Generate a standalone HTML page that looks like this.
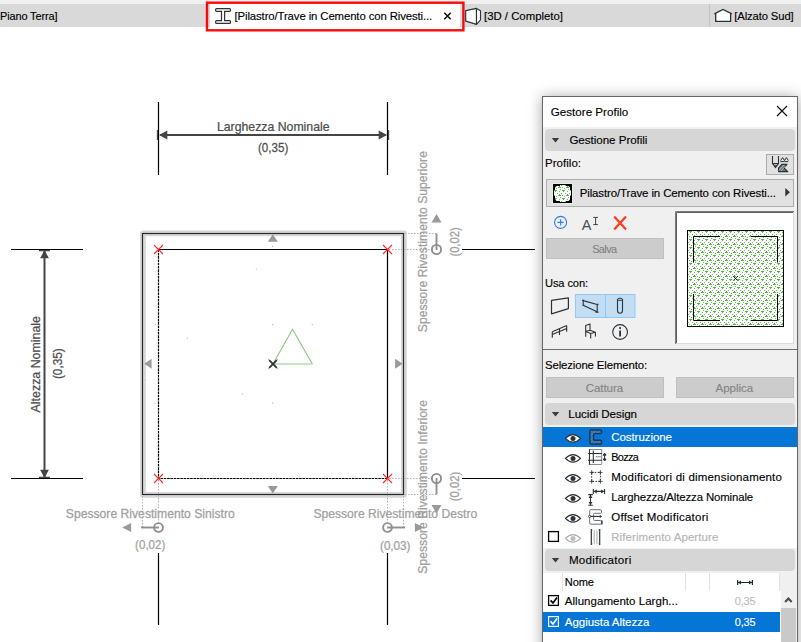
<!DOCTYPE html>
<html lang="it"><head><meta charset="utf-8"><title>Gestore Profilo</title>
<style>
html,body{margin:0;padding:0;background:#fff;}
body{width:801px;height:642px;overflow:hidden;position:relative;font-family:"Liberation Sans", sans-serif;font-size:11.5px;}
.abs,.t{position:absolute;}
.t{white-space:nowrap;line-height:16px;-webkit-text-stroke:0.14px currentColor;}
svg{position:absolute;left:0;top:0;overflow:visible;}
svg text{font-family:"Liberation Sans", sans-serif;}
.hdr{position:absolute;left:545px;width:250px;height:22px;background:#d6d6d6;border-radius:4px;}
.btn{position:absolute;background:#cccccc;border:1px solid #bfbfbf;box-sizing:border-box;}
.ns{-webkit-text-stroke:0 !important;}
.row{position:absolute;left:543px;width:254px;height:20px;}
</style></head><body>

<div class="abs" style="left:0;top:0;width:801px;height:4px;background:#f0f0f0"></div>
<div class="abs" style="left:0;top:4px;width:801px;height:23px;background:#d9d9d9"></div>
<div class="abs" style="left:210px;top:3px;width:250px;height:27px;background:#fff;"></div>
<div class="abs" style="left:208px;top:3px;width:2px;height:1px;background:#f0f0f0;"></div>
<div class="abs" style="left:460px;top:3px;width:3px;height:24px;background:#dde1e4;"></div>
<div class="abs" style="left:208px;top:27px;width:256px;height:3px;background:#fff;"></div>
<svg width="801" height="642"><rect x="207" y="2.7" width="256.4" height="27.6" fill="none" stroke="#fa0a0a" stroke-width="2.4"/></svg>
<div class="abs" style="left:709px;top:4px;width:1px;height:23px;background:#c2c2c2"></div>
<span class="t " style="left:0.00px;top:8.11px;font-size:10.95px;letter-spacing:-0.120px;color:#000">Piano Terra]</span>
<span class="t " style="left:234.50px;top:7.95px;font-size:11.39px;letter-spacing:-0.120px;color:#000">[Pilastro/Trave in Cemento con Rivesti...</span>
<span class="t " style="left:484.00px;top:7.95px;font-size:11.40px;letter-spacing:-0.014px;color:#000">[3D / Completo]</span>
<span class="t " style="left:734.30px;top:8.00px;font-size:11.26px;letter-spacing:-0.120px;color:#000">[Alzato Sud]</span>
<svg width="801" height="642" viewBox="0 0 801 642">
<rect x="142.9" y="233.4" width="261" height="261.4" fill="none" stroke="#d6d6d6" stroke-width="5.8" stroke-linejoin="round"/>
<rect x="142.5" y="233.5" width="261" height="261" fill="none" stroke="#262626" stroke-width="1.15"/>
<path d="M158.5 249.5H387.5V478.5" fill="none" stroke="#000" stroke-width="1.2"/><path d="M158.5 249.5V478.5H387.5" fill="none" stroke="#000" stroke-width="1.2" stroke-dasharray="2.6 0.7"/>
<path d="M405 233.5H436 M389 249.5H431 M389 478.5H431 M405 494.5H436 M142.5 496V527 M158.5 480V522 M387.5 480V522 M403.5 496V527" stroke="#b0b0b0" stroke-width="1" stroke-dasharray="1.5 1.5" fill="none"/>
<path d="M158.5 102V175 M387.5 102V175" stroke="#000" stroke-width="1.2"/>
<path d="M160 135H386" stroke="#444" stroke-width="2"/>
<path d="M159 135l8.3 -4.4v8.8z M387 135l-8.3 -4.4v8.8z" fill="#444"/>
<path d="M157.4 130v10 M388.6 130v10" stroke="#444" stroke-width="1.1"/>
<text transform="translate(216.90 130.60) scale(0.9460 1)" font-size="13.00" fill="#4d4d4d" stroke="#4d4d4d" stroke-width="0.25">Larghezza Nominale</text>
<text transform="translate(258.00 152.00) scale(0.8922 1)" font-size="13.00" fill="#4d4d4d" stroke="#4d4d4d" stroke-width="0.25">(0,35)</text>
<path d="M11 249.5H83 M11 478.5H83" stroke="#000" stroke-width="1.2"/>
<path d="M44.5 251V477" stroke="#444" stroke-width="2"/>
<path d="M44.5 250l-4.4 8.3h8.8z M44.5 478l-4.4 -8.3h8.8z" fill="#444"/>
<path d="M39 250.7h11 M39 477.3h11" stroke="#444" stroke-width="1.2"/>
<text transform="translate(39.90 412.40) rotate(-90) scale(0.9540 1)" font-size="13.00" fill="#4d4d4d" stroke="#4d4d4d" stroke-width="0.25">Altezza Nominale</text>
<text transform="translate(61.60 379.10) rotate(-90) scale(0.9099 1)" font-size="13.00" fill="#4d4d4d" stroke="#4d4d4d" stroke-width="0.25">(0,35)</text>
<text transform="translate(427.20 332.20) rotate(-90) scale(0.9362 1)" font-size="13.00" fill="#a0a0a0" stroke="#a0a0a0" stroke-width="0.25">Spessore Rivestimento Superiore</text>
<text transform="translate(459.00 256.50) rotate(-90) scale(0.8628 1)" font-size="13.00" fill="#a0a0a0" stroke="#a0a0a0" stroke-width="0.25">(0,02)</text>
<text transform="translate(427.20 573.80) rotate(-90) scale(0.9396 1)" font-size="13.00" fill="#a0a0a0" stroke="#a0a0a0" stroke-width="0.25">Spessore Rivestimento Inferiore</text>
<text transform="translate(459.00 501.20) rotate(-90) scale(0.8716 1)" font-size="13.00" fill="#a0a0a0" stroke="#a0a0a0" stroke-width="0.25">(0,02)</text>
<path d="M462 249.5H535 M462 478.5H535 M158.5 553V625 M387.5 553V625" stroke="#000" stroke-width="1.2"/>
<circle cx="436.5" cy="249.5" r="4.6" stroke="#8f8f8f" stroke-width="1.9" fill="none"/><path d="M436.5 233.5V250" stroke="#8f8f8f" stroke-width="1.9" fill="none"/><path d="M436.5 214l5 8.5h-10z" fill="#9a9a9a"/>
<circle cx="436.5" cy="478.5" r="4.6" stroke="#8f8f8f" stroke-width="1.9" fill="none"/><path d="M436.5 478V494.5" stroke="#8f8f8f" stroke-width="1.9" fill="none"/><path d="M436.5 513.5l5 -8.5h-10z" fill="#9a9a9a"/>
<circle cx="158.5" cy="527.5" r="4.4" stroke="#8f8f8f" stroke-width="1.9" fill="none"/><path d="M141 527.5H159" stroke="#8f8f8f" stroke-width="1.9" fill="none"/><path d="M122.3 527.5l8.8 -4.4v8.8z" fill="#9a9a9a"/>
<circle cx="387.5" cy="527.5" r="4.4" stroke="#8f8f8f" stroke-width="1.9" fill="none"/><path d="M387 527.5H405" stroke="#8f8f8f" stroke-width="1.9" fill="none"/><path d="M423.7 527.5l-8.8 -4.4v8.8z" fill="#9a9a9a"/>
<text transform="translate(65.80 518.00) scale(0.9367 1)" font-size="13.00" fill="#a0a0a0" stroke="#a0a0a0" stroke-width="0.25">Spessore Rivestimento Sinistro</text>
<text transform="translate(135.10 549.30) scale(0.8893 1)" font-size="13.00" fill="#a0a0a0" stroke="#a0a0a0" stroke-width="0.25">(0,02)</text>
<text transform="translate(313.40 517.80) scale(0.9341 1)" font-size="13.00" fill="#a0a0a0" stroke="#a0a0a0" stroke-width="0.25">Spessore Rivestimento Destro</text>
<text transform="translate(380.00 549.60) scale(0.8981 1)" font-size="13.00" fill="#a0a0a0" stroke="#a0a0a0" stroke-width="0.25">(0,03)</text>
<path d="M154.0 245.0l9 9m0 -9l-9 9" stroke="#ff2a2a" stroke-width="1.1" fill="none"/>
<path d="M383.0 245.0l9 9m0 -9l-9 9" stroke="#ff2a2a" stroke-width="1.1" fill="none"/>
<path d="M154.0 474.0l9 9m0 -9l-9 9" stroke="#ff2a2a" stroke-width="1.1" fill="none"/>
<path d="M383.0 474.0l9 9m0 -9l-9 9" stroke="#ff2a2a" stroke-width="1.1" fill="none"/>
<path d="M272.8 234.3l5 7.5h-10z M272.8 493.5l5 -7.5h-10z M144.3 363.7l7.3 -5v10z M402.7 363.7l-7.6 -5v10z" fill="#9a9a9a"/>
<path d="M273 364L292.5 329.3L312.4 364" fill="none" stroke="#86c478" stroke-width="1.1"/><path d="M273 364H312.4" stroke="#b5dcab" stroke-width="1.6"/>
<path d="M268.3 359.3l9.4 9.4m0 -9.4l-9.4 9.4" stroke="#ff5a5a" stroke-width="1"/><path d="M269.2 360.2l7.6 7.6m0 -7.6l-7.6 7.6" stroke="#333" stroke-width="1.8"/>
<g fill="#a5d69a"><rect x="255.8" y="268.6" width="1.2" height="1.2"/><rect x="272.0" y="245.8" width="1.2" height="1.2"/><rect x="154.6" y="324.0" width="1.2" height="1.2"/><rect x="272.0" y="324.0" width="1.2" height="1.2"/><rect x="311.6" y="324.0" width="1.2" height="1.2"/><rect x="186.7" y="337.7" width="1.2" height="1.2"/><rect x="144.9" y="379.8" width="1.2" height="1.2"/><rect x="241.8" y="393.4" width="1.2" height="1.2"/><rect x="154.6" y="402.4" width="1.2" height="1.2"/><rect x="272.0" y="402.4" width="1.2" height="1.2"/></g>
</svg>
<div class="abs" style="left:542px;top:96px;width:254px;height:560px;background:#f0f0f0;border:1px solid #666;box-shadow:0 1px 13px rgba(0,0,0,0.36);"></div>
<div class="abs" style="left:543px;top:97px;width:254px;height:30px;background:#fff"></div>
<span class="t " style="left:550.80px;top:104.38px;font-size:11.60px;letter-spacing:0.010px;color:#000">Gestore Profilo</span>
<svg width="801" height="642"><path d="M777 106l10 10m0 -10l-10 10" stroke="#111" stroke-width="1.2" fill="none"/></svg>
<div class="hdr" style="top:129px"></div>
<svg width="801" height="642"><path d="M551.8 138.0h7.4l-3.7 4.6z" fill="#3c3c3c"/></svg>
<span class="t " style="left:569.40px;top:131.98px;font-size:11.60px;letter-spacing:-0.037px;color:#000">Gestione Profili</span>
<span class="t " style="left:545.10px;top:154.82px;font-size:11.50px;letter-spacing:0.015px;color:#000">Profilo:</span>
<div class="abs" style="left:766px;top:154px;width:28px;height:21px;background:#e1e1e1;border:1px solid #adadad;box-sizing:border-box"></div>
<div class="abs" style="left:546px;top:179px;width:248px;height:28px;background:#e1e1e1;border:1px solid #adadad;box-sizing:border-box"></div>
<span class="t " style="left:579.70px;top:185.13px;font-size:11.47px;letter-spacing:-0.120px;color:#000">Pilastro/Trave in Cemento con Rivesti...</span>
<svg width="801" height="642"><path d="M785.3 188l4.6 4.3l-4.6 4.3z" fill="#333"/></svg>
<div class="btn" style="left:546px;top:238px;width:118px;height:21px"></div>
<span class="t " style="left:592.20px;top:241.42px;font-size:10.90px;letter-spacing:-0.592px;color:#838383">Salva</span>
<span class="t " style="left:545.00px;top:274.84px;font-size:11.13px;letter-spacing:-0.120px;color:#000">Usa con:</span>
<span class="t ns" style="left:581.70px;top:217.31px;font-size:14.40px;letter-spacing:0.195px;color:#454d53">A</span>
<div class="abs" style="left:543px;top:349px;width:254px;height:1px;background:#6e6e6e"></div>
<span class="t " style="left:545.00px;top:357.07px;font-size:11.36px;letter-spacing:-0.120px;color:#000">Selezione Elemento:</span>
<div class="btn" style="left:546px;top:377px;width:118px;height:21px"></div>
<div class="btn" style="left:676px;top:377px;width:118px;height:21px"></div>
<span class="t " style="left:585.80px;top:380.22px;font-size:11.50px;letter-spacing:-0.069px;color:#838383">Cattura</span>
<span class="t " style="left:715.50px;top:380.22px;font-size:11.50px;letter-spacing:-0.003px;color:#838383">Applica</span>
<div class="hdr" style="top:403px"></div>
<svg width="801" height="642"><path d="M551.8 412.0h7.4l-3.7 4.6z" fill="#3c3c3c"/></svg>
<span class="t " style="left:568.30px;top:405.88px;font-size:11.60px;letter-spacing:-0.070px;color:#000">Lucidi Design</span>
<div class="abs" style="left:543px;top:427px;width:254px;height:121px;background:#fff"></div>
<div class="row" style="top:427px;background:#0676d6"></div>
<span class="t " style="left:611.20px;top:429.02px;font-size:11.50px;letter-spacing:-0.056px;color:#fff">Costruzione</span>
<span class="t " style="left:611.20px;top:449.22px;font-size:10.90px;letter-spacing:-0.674px;color:#000">Bozza</span>
<span class="t " style="left:611.20px;top:469.02px;font-size:11.50px;letter-spacing:0.193px;color:#000">Modificatori di dimensionamento</span>
<span class="t " style="left:611.20px;top:489.05px;font-size:11.40px;letter-spacing:-0.120px;color:#000">Larghezza/Altezza Nominale</span>
<span class="t " style="left:611.20px;top:509.02px;font-size:11.50px;letter-spacing:0.263px;color:#000">Offset Modificatori</span>
<span class="t " style="left:611.20px;top:529.02px;font-size:11.50px;letter-spacing:0.091px;color:#b4b4b4">Riferimento Aperture</span>
<div class="hdr" style="top:549px"></div>
<svg width="801" height="642"><path d="M551.8 558.0h7.4l-3.7 4.6z" fill="#3c3c3c"/></svg>
<span class="t " style="left:568.90px;top:552.08px;font-size:11.60px;letter-spacing:0.281px;color:#000">Modificatori</span>
<div class="abs" style="left:543px;top:573px;width:254px;height:80px;background:#fff"></div>
<div class="abs" style="left:780px;top:573px;width:17px;height:18px;background:#f0f0f0"></div>
<div class="abs" style="left:562px;top:573px;width:1px;height:18px;background:#e2e2e2"></div>
<div class="abs" style="left:685px;top:573px;width:1px;height:18px;background:#e2e2e2"></div>
<div class="abs" style="left:709px;top:573px;width:1px;height:18px;background:#e2e2e2"></div>
<div class="abs" style="left:779px;top:573px;width:1px;height:18px;background:#e2e2e2"></div>
<div class="abs" style="left:543px;top:612px;width:237px;height:19.6px;background:#0676d6"></div>
<div class="abs" style="left:781px;top:591px;width:16px;height:17px;background:#f0f0f0"></div>
<div class="abs" style="left:781px;top:608px;width:15px;height:40px;background:#c9c9c9"></div>
<div class="abs" style="left:796px;top:591px;width:1px;height:60px;background:#efefef"></div>
<span class="t " style="left:564.80px;top:574.16px;font-size:11.08px;letter-spacing:-0.120px;color:#000">Nome</span>
<span class="t " style="left:564.80px;top:592.82px;font-size:11.50px;letter-spacing:0.034px;color:#000">Allungamento Largh...</span>
<span class="t " style="left:564.80px;top:613.82px;font-size:11.50px;letter-spacing:-0.035px;color:#fff">Aggiusta Altezza</span>
<span class="t " style="left:734.80px;top:593.02px;font-size:10.90px;letter-spacing:-0.172px;color:#bdbdbd">0,35</span>
<span class="t " style="left:734.80px;top:614.02px;font-size:10.90px;letter-spacing:-0.172px;color:#fff">0,35</span>
<svg width="801" height="642" viewBox="0 0 801 642" fill="none">
<path d="M216.6 8.6H229.5Q230.5 8.6 230.5 9.6V10.3Q230.5 11.3 229.5 11.3H224.6V20.7H229.5Q230.5 20.7 230.5 21.7V22.4Q230.5 23.4 229.5 23.4H216.6Q215.6 23.4 215.6 22.4V21.7Q215.6 20.7 216.6 20.7H221.5V11.3H216.6Q215.6 11.3 215.6 10.3V9.6Q215.6 8.6 216.6 8.6Z" fill="#fff" stroke="#2b3338" stroke-width="1.2"/>
<path d="M465.7 10.6L476.5 8.4V24.3L465.7 21.2Z" fill="#fff" stroke="#2b3338" stroke-width="1.2" stroke-linejoin="round"/><path d="M476.5 8.4L480.5 10.7V19.8L476.5 24.3Z" fill="#fff" stroke="#2b3338" stroke-width="1.1" stroke-linejoin="round"/>
<path d="M715.7 13.3L723 9.6L730.6 13.3V21.4H715.7Z" fill="#fff"/><path d="M714.3 13.9L723 9.4L731.9 13.9M715.7 13.4V21.4H730.6V13.4" stroke="#2b3338" stroke-width="1.3" stroke-linejoin="miter"/>
<path d="M444.3 12.8l6.4 6.4m0 -6.4l-6.4 6.4" stroke="#111" stroke-width="1.6"/>
<defs><pattern id="pz" x="689" y="231" width="8" height="8" patternUnits="userSpaceOnUse"><g fill="#55b444" shape-rendering="crispEdges"><rect x="0" y="0" width="3" height="1"/><rect x="1" y="1" width="1" height="1"/><rect x="5" y="4" width="1" height="1"/><rect x="4" y="5" width="3" height="1"/><g fill="#68bf58"><rect x="5" y="1" width="1" height="1"/><rect x="3" y="3" width="1" height="1"/><rect x="7" y="3" width="1" height="1"/><rect x="0" y="5" width="1" height="1"/><rect x="2" y="6" width="1" height="1"/><rect x="6" y="7" width="1" height="1"/></g></g></pattern><pattern id="pt" x="554" y="182" width="8" height="8" patternUnits="userSpaceOnUse"><g fill="#55b444" shape-rendering="crispEdges"><rect x="0" y="0" width="3" height="1"/><rect x="1" y="1" width="1" height="1"/><rect x="5" y="4" width="1" height="1"/><rect x="4" y="5" width="3" height="1"/><g fill="#68bf58"><rect x="5" y="1" width="1" height="1"/><rect x="3" y="3" width="1" height="1"/><rect x="7" y="3" width="1" height="1"/><rect x="0" y="5" width="1" height="1"/><rect x="2" y="6" width="1" height="1"/><rect x="6" y="7" width="1" height="1"/></g></g></pattern></defs>
<rect x="675" y="211" width="119" height="133" fill="#fff"/>
<path d="M675.5 344V211.5H794" stroke="#7a7a7a" stroke-width="1"/><path d="M676.5 343V212.5H793" stroke="#5f5f5f" stroke-width="1"/><path d="M676 343.5H793.5V212" stroke="#dcdcdc" stroke-width="1"/>
<rect x="687.5" y="230.5" width="96" height="96" fill="#fff"/><rect x="687.5" y="230.5" width="96" height="96" fill="url(#pz)" stroke="#000" stroke-width="1"/>
<path d="M693.5 262.6V236.5H720M751 236.5H777.5V262.6M693.5 294V320.5H720M751 320.5H777.5V294" stroke="#000" stroke-width="1"/>
<path d="M733.3 276.2l4.4 4.4m0 -4.4l-4.4 4.4" stroke="#000" stroke-width="0.9"/>
<rect x="552.5" y="183.5" width="20" height="20" fill="#f4f4f4"/><rect x="553" y="184" width="19" height="19" fill="#000"/><path d="M556.5 186H560V185H566V186H568.5L570 187.5V190H571V196H570V199.5L568.5 201H566V202H560V201H556.5L555 199.5V196H554V190H555V187.5Z" fill="#fff"/><path d="M556.5 186H560V185H566V186H568.5L570 187.5V190H571V196H570V199.5L568.5 201H566V202H560V201H556.5L555 199.5V196H554V190H555V187.5Z" fill="url(#pt)"/>
<path d="M772.5 156V163.6L775.5 167.6L778.5 163.6V156M772.5 163.6H778.5" stroke="#2b3338" stroke-width="1.1"/>
<path d="M774.3 165.2h2.4l-1.2 2.2z" fill="#2b3338"/>
<path d="M780.6 160.6l2 -3l2 3m-0.2 0l2 -3l2 3M780.4 161.6h4M784.6 161.6h3.6" stroke="#2b3338" stroke-width="1"/>
<path d="M778.5 171.6V168L781.8 164.4H787L784 168L787.8 171.6Z" fill="#6b7377" stroke="#2b3338" stroke-width="1.1" stroke-linejoin="round"/>
<path d="M779 170.5l5 -5.6M781 171l4.5 -5" stroke="#d8d8d8" stroke-width="0.7"/>
<circle cx="560.6" cy="222.4" r="6" stroke="#2f7df6" stroke-width="1.1"/><path d="M557.5 222.4h6.2M560.6 219.3v6.2" stroke="#2f7df6" stroke-width="1.1"/>
<path d="M593.3 217.4h4.6M593.3 224.6h4.6M595.6 217.4v7.2" stroke="#3a4248" stroke-width="1"/>
<path d="M614.2 216.4l11.8 13.2m0 -13.2l-11.8 13.2" stroke="#ff3b1c" stroke-width="2.2"/>
<rect x="575.5" y="294.5" width="30" height="23" fill="#c3ddf3" stroke="#92c8f5"/><rect x="605.5" y="294.5" width="29.5" height="23" fill="#c3ddf3" stroke="#92c8f5"/>
<path d="M551.5 300.3L568.4 297.9V308.6L551.5 313.9Z" stroke="#2b3338" stroke-width="1.2" stroke-linejoin="round"/>
<path d="M582.3 300.4L598 304.7M583.2 305.2L597 311.8M583.2 300.4V305.4M597.2 304.4V312.4M595.6 304.2H598.6M595.4 312.2H598.6M582 300.3h2.2M582.4 305.3h2" stroke="#2b3338" stroke-width="1.1"/>
<path d="M617.5 299.3V310.5Q617.6 313.2 620 313.3Q622.4 313.2 622.5 310.5V299.3" stroke="#2b3338" stroke-width="1.1"/><ellipse cx="620" cy="299.3" rx="2.5" ry="1.1" stroke="#2b3338" stroke-width="1"/>
<path d="M552.3 331.8V337.8M559.5 328.8V335M566.7 325.4V331.8M552.3 331.8L566.7 325.6M552.3 334.6L566.7 328.4" stroke="#2b3338" stroke-width="1.1"/>
<path d="M585.7 336.8V325.4L590 323.9V330.6M585.7 331.6L590 330.2L595.4 332.2L590.7 333.5ZM590.7 333.5V338.6M595.4 332.2V336.6" stroke="#2b3338" stroke-width="1.1" stroke-linejoin="round"/>
<circle cx="620.1" cy="332" r="7.4" stroke="#2b3338" stroke-width="1.1"/><path d="M620.1 330.6V336.6" stroke="#2b3338" stroke-width="1.8"/><circle cx="620.1" cy="328.1" r="1.05" fill="#2b3338"/>
<path d="M565.4 438.4q7.6 -7.6 15.2 0q-7.6 7.6 -15.2 0z" fill="#fff" stroke="#2b3338" stroke-width="1.15" stroke-linejoin="round"/><circle cx="573.0" cy="438.4" r="2.5" fill="#2b3338"/>
<path d="M565.4 458.4q7.6 -7.6 15.2 0q-7.6 7.6 -15.2 0z" fill="#fff" stroke="#2b3338" stroke-width="1.15" stroke-linejoin="round"/><circle cx="573.0" cy="458.4" r="2.5" fill="#2b3338"/>
<path d="M565.4 478.4q7.6 -7.6 15.2 0q-7.6 7.6 -15.2 0z" fill="#fff" stroke="#2b3338" stroke-width="1.15" stroke-linejoin="round"/><circle cx="573.0" cy="478.4" r="2.5" fill="#2b3338"/>
<path d="M565.4 498.4q7.6 -7.6 15.2 0q-7.6 7.6 -15.2 0z" fill="#fff" stroke="#2b3338" stroke-width="1.15" stroke-linejoin="round"/><circle cx="573.0" cy="498.4" r="2.5" fill="#2b3338"/>
<path d="M565.4 518.4q7.6 -7.6 15.2 0q-7.6 7.6 -15.2 0z" fill="#fff" stroke="#2b3338" stroke-width="1.15" stroke-linejoin="round"/><circle cx="573.0" cy="518.4" r="2.5" fill="#2b3338"/>
<path d="M565.4 538.4q7.6 -7.6 15.2 0q-7.6 7.6 -15.2 0z" fill="#fff" stroke="#b0b0b0" stroke-width="1.15" stroke-linejoin="round"/><circle cx="573.0" cy="538.4" r="2.5" fill="#bdbdbd"/>
<path d="M591.3 430H600.5Q601.5 430 601.5 431V432.6Q601.5 433.6 600.5 433.6H594.6Q593.6 433.6 593.6 434.6V439.3Q593.6 440.3 594.6 440.3H600.5Q601.5 440.3 601.5 441.3V443Q601.5 444 600.5 444H591.3Q589.9 444 589.9 442.6V431.4Q589.9 430 591.3 430Z" fill="#2b86e0" stroke="#2b3338" stroke-width="1.4"/>
<path d="M590.5 434l3.5 -3.6M590.5 438l3 -3M590.5 442l3 -3M595 433.3l3 -3M598.5 433.3l2.6 -2.6M592 443.6l3 -3M595.5 443.6l3 -3M599 443.6l2.2 -2.2" stroke="#2b3338" stroke-width="0.55" stroke-opacity="0.75"/>
<path d="M589.5 449.5H601.7V464.5H589.5" stroke="#8a8f92" stroke-width="1"/>
<path d="M589.5 449.3V464.7M593.3 450.5V463M588 453.5H602M588 460.3H602" stroke="#2b3338" stroke-width="1.1"/>
<path d="M595.5 457.3l0.9 -1l0.9 1l0.9 -1l0.9 1l0.9 -1l0.9 1" stroke="#2b3338" stroke-width="0.6"/>
<path d="M604.6 454.2V460M604.6 453.2l1.5 2h-3zM604.6 461l1.5 -2h-3z" stroke="#2b3338" stroke-width="1" fill="#2b3338"/>
<path d="M591.7 472.4H600.4V481.4H591.7Z" stroke="#2b3338" stroke-width="1" stroke-dasharray="1.6 1.4"/>
<path d="M589.5 472.4h4.4M591.7 470.2v4.4" stroke="#2b3338" stroke-width="0.8"/>
<path d="M598.2 472.4h4.4M600.4 470.2v4.4" stroke="#2b3338" stroke-width="0.8"/>
<path d="M589.5 481.4h4.4M591.7 479.2v4.4" stroke="#2b3338" stroke-width="0.8"/>
<path d="M598.2 481.4h4.4M600.4 479.2v4.4" stroke="#2b3338" stroke-width="0.8"/>
<path d="M593.3 489V494M604.6 489V494M593.3 491.4H604.6M588.3 494.6H592.8M588.3 505.3H592.8M590.5 494.6V505.3" stroke="#2b3338" stroke-width="1.1"/>
<path d="M593.6 491.4l3.2 -2v4zM604.3 491.4l-3.2 -2v4zM590.5 494.8l-2 3.2h4zM590.5 505.1l-2 -3.2h4z" fill="#2b3338"/>
<path d="M590.8 509.7H600.5Q601.5 509.7 601.5 510.7V512.3Q601.5 513.3 600.5 513.3H594.6Q593.6 513.3 593.6 514.3V519.5Q593.6 520.5 594.6 520.5H600.8Q601.8 520.5 601.8 521.5V523.2Q601.8 524.2 600.8 524.2H590.8Q589.7 524.2 589.7 523.2V510.7Q589.7 509.7 590.8 509.7Z" stroke="#6e7579" stroke-width="1"/>
<path d="M590.5 516.4H601" stroke="#2b3338" stroke-width="1.1"/><circle cx="589.6" cy="516.4" r="1.1" fill="#fff" stroke="#2b3338" stroke-width="0.9"/><path d="M602.2 516.4l-2.4 -1.5v3z" fill="#2b3338"/><path d="M601.9 520.5V524.5" stroke="#2b3338" stroke-width="1.3"/>
<path d="M591.3 529V545M599.7 529V545" stroke="#2b3338" stroke-width="1.2"/><path d="M594.2 531V543.5M597 531V543.5" stroke="#9aa0a3" stroke-width="0.9"/><path d="M592 530.2h7M592 543.8h7" stroke="#b5b9bb" stroke-width="0.8" stroke-dasharray="1 1"/>
<rect x="548.6" y="531.6" width="9.8" height="9.8" fill="#fff" stroke="#000" stroke-width="1.3"/>
<path d="M737.6 580V585M752.4 580V585M738 582.5H752" stroke="#1d2a30" stroke-width="1.2"/><path d="M738 582.5l3 -2v4zM752 582.5l-3 -2v4z" fill="#1d2a30"/>
<rect x="548.6" y="595.6" width="9.8" height="9.8" fill="#fff" stroke="#000" stroke-width="1.3"/><path d="M550.6 600.4l2.4 2.6l4 -5.4" stroke="#000" stroke-width="1.7"/>
<rect x="548.6" y="616.6" width="9.8" height="9.8" stroke="#fff" stroke-width="1.2"/><path d="M550.6 621.4l2.4 2.6l4 -5.4" stroke="#fff" stroke-width="1.7"/>
<path d="M785.1 602l3.3 -3.5l3.3 3.5" stroke="#4d4d4d" stroke-width="2.1"/>
</svg>
</body></html>
